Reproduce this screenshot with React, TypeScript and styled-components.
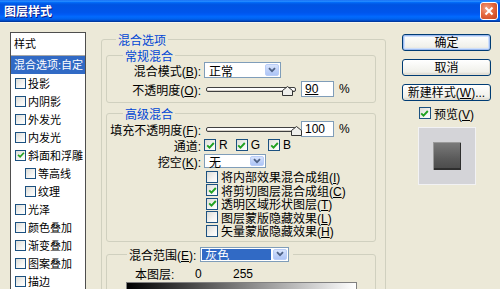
import React from 'react';
import styled, { createGlobalStyle } from 'styled-components';

const Global = createGlobalStyle`
  html, body { margin: 0; padding: 0; background: #ECE9D8; }
  body {
    font-family: "Liberation Sans", "Noto Sans CJK SC", sans-serif;
    font-size: 12px;
    color: #000;
  }
  * { box-sizing: border-box; }
  u { text-decoration: underline; text-underline-offset: 1px; }
`;

const Window = styled.div`
  width: 500px;
  height: 289px;
  overflow: hidden;
  display: flex;
  flex-direction: column;
  background: #ECE9D8;
`;

const TitleBar = styled.div`
  flex: none;
  height: 23px;
  display: flex;
  align-items: center;
  justify-content: space-between;
  padding: 0 2px 1px 4px;
  border-bottom: 1px solid #F7F5EE;
  background: linear-gradient(#0058ee 0%, #3593ff 4%, #288eff 6%, #127dff 8%, #036ffc 10%, #0262ee 14%, #0057e5 20%, #0054e3 24%, #0055eb 56%, #005bf5 66%, #026afe 76%, #0062ef 86%, #0052d6 92%, #0040ab 96%, #003092 100%);
`;

const Title = styled.div`
  font-family: "Noto Sans CJK SC", sans-serif;
  font-weight: 700;
  font-size: 12px;
  line-height: 14px;
  color: #fff;
  text-shadow: 1px 1px 0 #0a1883;
`;

const CloseBtn = styled.div`
  width: 18px;
  height: 18px;
  border: 1px solid #fff;
  border-radius: 3px;
  background: radial-gradient(circle at 35% 35%, #f3a58a 0%, #e5693f 45%, #c4401c 100%);
  display: flex;
  align-items: center;
  justify-content: center;
`;

const Body = styled.div`
  flex: 1;
  display: flex;
  align-items: flex-start;
  padding: 9px 0 0 10px;
`;

const StyleList = styled.div`
  flex: none;
  width: 76px;
  height: 270px;
  background: #fff;
  border: 1px solid #4e4e4e;
  font-size: 11px;
`;

const ListHeader = styled.div`
  height: 23px;
  line-height: 22px;
  padding-left: 3px;
  border-bottom: 1px solid #a8a8a8;
`;

const ListSelected = styled.div`
  height: 18px;
  line-height: 18px;
  padding-left: 3px;
  background: #316ac5;
  color: #fff;
  white-space: nowrap;
`;

const ListItem = styled.div<{ $indent?: boolean }>`
  height: 18px;
  display: flex;
  align-items: center;
  gap: 2px;
  padding-left: ${p => (p.$indent ? 14 : 4)}px;
  white-space: nowrap;
`;

const CheckBox = styled.span<{ $size: number }>`
  flex: none;
  width: ${p => p.$size}px;
  height: ${p => p.$size}px;
  border: 1px solid #1c5180;
  background: linear-gradient(135deg, #dcdcd7 0%, #f4f4f2 60%, #ffffff 100%);
  display: inline-flex;
  align-items: center;
  justify-content: center;
`;

const Main = styled.div`
  flex: none;
  margin-left: 15px;
  margin-top: 1px;
`;

const Group = styled.fieldset<{ $outer?: boolean; $mt?: number }>`
  margin: ${p => p.$mt ?? 0}px 0 0 0;
  padding: ${p => (p.$outer ? '0 9px 0 4px' : '0')};
  border: 1px solid #d0d0bf;
  border-radius: 3px;
  min-width: 0;
  width: ${p => (p.$outer ? '285px' : '270px')};
  height: ${p => (p.$outer ? '300px' : 'auto')};
`;

const Legend = styled.legend<{ $ml: number }>`
  margin-left: ${p => p.$ml}px;
  padding: 0 2px;
  font-size: 12px;
  line-height: 13px;
  color: #0046d5;
  font-family: "Noto Sans CJK SC", sans-serif;
`;

const RangeLegend = styled.legend`
  margin-left: 20px;
  padding: 0 4px 0 2px;
  display: flex;
  align-items: center;
  gap: 4px;
  height: 15px;
`;

const GroupBody = styled.div<{ $pt?: number; $pb?: number; $gap?: number }>`
  display: flex;
  flex-direction: column;
  gap: ${p => p.$gap ?? 0}px;
  padding-top: ${p => p.$pt ?? 0}px;
  padding-bottom: ${p => p.$pb ?? 0}px;
`;

const Row = styled.div<{ $h: number; $mt?: number }>`
  height: ${p => p.$h}px;
  margin-top: ${p => p.$mt ?? 0}px;
  display: flex;
  align-items: center;
  white-space: nowrap;
`;

const Label = styled.div`
  flex: none;
  width: 96px;
  padding-right: 2px;
  text-align: right;
  white-space: nowrap;
  margin-right: 1px;
`;

const SelectBox = styled.div<{ $w: number; $h: number }>`
  flex: none;
  width: ${p => p.$w}px;
  height: ${p => p.$h}px;
  border: 1px solid #7f9db9;
  background: #fff;
  display: flex;
  align-items: stretch;
  padding: 1px;
`;

const SelectText = styled.div<{ $hl?: boolean }>`
  flex: 1;
  padding-left: 3px;
  display: flex;
  align-items: center;
  background: ${p => (p.$hl ? '#316ac5' : 'transparent')};
  color: ${p => (p.$hl ? '#fff' : '#000')};
  margin-right: 2px;
`;

const DropBtn = styled.div`
  flex: none;
  width: 14px;
  border: 1px solid #b9cdf7;
  border-radius: 2px;
  background: linear-gradient(#d8e4fc, #bccff8 60%, #aec5f6);
  display: flex;
  align-items: center;
  justify-content: center;
`;

const SliderWrap = styled.div`
  flex: none;
  position: relative;
  width: 90px;
  height: 16px;
  margin-left: 2px;
`;

const Track = styled.div`
  margin-top: 6px;
  height: 5px;
  border: 1px solid #404040;
  border-radius: 2px;
  background: #fff;
  box-shadow: inset 0 -1px 0 #d4d0c8;
`;

const Thumb = styled.svg`
  position: absolute;
  top: 5px;
`;

const NumInput = styled.div`
  flex: none;
  width: 33px;
  height: 16px;
  margin-left: 5px;
  border: 1px solid #7f9db9;
  background: #fff;
  padding-left: 3px;
  line-height: 14px;
`;

const Pct = styled.span`
  margin-left: 5px;
`;

const Channel = styled.span`
  display: inline-flex;
  align-items: center;
  gap: 3px;
  margin-right: 8px;
`;

const CheckRow = styled.div`
  height: 13.5px;
  display: flex;
  align-items: center;
  gap: 3px;
  padding-left: 99px;
  white-space: nowrap;
`;

const RangeRow = styled.div`
  height: 14px;
  display: flex;
  align-items: center;
  padding-left: 28px;
`;

const RangeCell = styled.span<{ $w: number }>`
  width: ${p => p.$w}px;
`;

const GradientBar = styled.div`
  margin: 1px 0 0 19px;
  width: 231px;
  height: 12px;
  border: 1px solid #808080;
  background: linear-gradient(to right, #000, #fff);
`;

const RightCol = styled.div`
  flex: none;
  width: 89px;
  margin-left: 16px;
  margin-top: 2px;
  display: flex;
  flex-direction: column;
  align-items: center;
`;

const Button = styled.div<{ $default?: boolean }>`
  width: 89px;
  height: 17px;
  margin-bottom: 8px;
  border: 1px solid #003c74;
  border-radius: 3px;
  background: linear-gradient(#ffffff, #f0f0ea 80%, #d6d0c5);
  box-shadow: ${p => (p.$default ? 'inset 0 0 0 1px #9ebbf0, inset 0 0 0 2px #cfe0fb' : 'inset -1px -1px 0 #e3e0d5')};
  display: flex;
  align-items: center;
  justify-content: center;
  line-height: 14px;
  white-space: nowrap;
`;

const PreviewRow = styled.div`
  height: 14px;
  margin-top: -3px;
  display: flex;
  align-items: center;
  gap: 3px;
`;

const PreviewFrame = styled.div`
  margin-top: 7px;
  width: 58px;
  height: 58px;
  background: #d4d4d8;
  border: 1px solid #f2f2f4;
  display: flex;
  align-items: center;
  justify-content: center;
`;

const PreviewSwatch = styled.div`
  width: 28px;
  height: 28px;
  background: linear-gradient(#7c7c7c, #5a5a5a 60%, #4a4a4a);
  box-shadow: inset 1px 1px 0 #9a9a9a, inset -1px -2px 0 #2e2e2e;
`;

const Spacer = styled.div<{ $h: number }>`
  height: ${p => p.$h}px;
`;

const Check: React.FC<{ checked?: boolean; size?: number }> = ({ checked, size = 12 }) => (
  <CheckBox $size={size}>
    {checked && (
      <svg width={size - 3} height={size - 3} viewBox="0 0 9 9">
        <path d="M1.2 4.3 L3.5 6.6 L7.8 2" stroke="#21a121" strokeWidth="1.9" fill="none" />
      </svg>
    )}
  </CheckBox>
);

const Select: React.FC<{ value: string; w: number; h?: number; hl?: boolean }> = ({ value, w, h = 16, hl }) => (
  <SelectBox $w={w} $h={h}>
    <SelectText $hl={hl}>{value}</SelectText>
    <DropBtn>
      <svg width="8" height="6" viewBox="0 0 8 6">
        <path d="M1 1.2 L4 4.2 L7 1.2" stroke="#4d6185" strokeWidth="1.8" fill="none" />
      </svg>
    </DropBtn>
  </SelectBox>
);

const Slider: React.FC<{ value: number }> = ({ value }) => (
  <SliderWrap>
    <Track />
    <Thumb width="11" height="10" viewBox="0 0 11 10" style={{ left: `${(value / 100) * 90 - 5.5}px` }}>
      <path d="M0.5 9.5 L0.5 4.5 L5.5 0.5 L10.5 4.5 L10.5 9.5 Z" fill="#f0f0ec" stroke="#333" strokeWidth="1" />
    </Thumb>
  </SliderWrap>
);

const listItems: { label: string; checked?: boolean; indent?: boolean }[] = [
  { label: '投影' },
  { label: '内阴影' },
  { label: '外发光' },
  { label: '内发光' },
  { label: '斜面和浮雕', checked: true },
  { label: '等高线', indent: true },
  { label: '纹理', indent: true },
  { label: '光泽' },
  { label: '颜色叠加' },
  { label: '渐变叠加' },
  { label: '图案叠加' },
  { label: '描边' },
];

const options: { text: string; key: string; checked: boolean }[] = [
  { text: '将内部效果混合成组', key: 'I', checked: false },
  { text: '将剪切图层混合成组', key: 'C', checked: true },
  { text: '透明区域形状图层', key: 'T', checked: true },
  { text: '图层蒙版隐藏效果', key: 'L', checked: false },
  { text: '矢量蒙版隐藏效果', key: 'H', checked: false },
];

export default function App() {
  return (
    <>
      <Global />
      <Window>
        <TitleBar>
          <Title>图层样式</Title>
          <CloseBtn>
            <svg width="10" height="10" viewBox="0 0 10 10">
              <path d="M1.5 1.5 L8.5 8.5 M8.5 1.5 L1.5 8.5" stroke="#fff" strokeWidth="2" />
            </svg>
          </CloseBtn>
        </TitleBar>
        <Body>
          <StyleList>
            <ListHeader>样式</ListHeader>
            <ListSelected>混合选项:自定</ListSelected>
            {listItems.map(it => (
              <ListItem key={it.label} $indent={it.indent}>
                <Check size={11} checked={it.checked} />
                <span>{it.label}</span>
              </ListItem>
            ))}
          </StyleList>

          <Main>
            <Group $outer>
              <Legend $ml={10}>混合选项</Legend>
              <Group $mt={3}>
                <Legend $ml={16}>常规混合</Legend>
                <GroupBody $pt={0} $pb={5} $gap={3}>
                  <Row $h={16}>
                    <Label>混合模式(<u>B</u>):</Label>
                    <Select value="正常" w={77} />
                  </Row>
                  <Row $h={16}>
                    <Label>不透明度(<u>O</u>):</Label>
                    <Slider value={90} />
                    <NumInput><u>90</u></NumInput>
                    <Pct>%</Pct>
                  </Row>
                </GroupBody>
              </Group>

              <Group $mt={4}>
                <Legend $ml={16}>高级混合</Legend>
                <GroupBody $pt={1} $pb={3}>
                  <Row $h={16}>
                    <Label>填充不透明度(<u>F</u>):</Label>
                    <Slider value={100} />
                    <NumInput>100</NumInput>
                    <Pct>%</Pct>
                  </Row>
                  <Row $h={14} $mt={1}>
                    <Label>通道:</Label>
                    <Channel><Check checked />R</Channel>
                    <Channel><Check checked />G</Channel>
                    <Channel><Check checked />B</Channel>
                  </Row>
                  <Row $h={14} $mt={2}>
                    <Label>挖空(<u>K</u>):</Label>
                    <Select value="无" w={62} h={14} />
                  </Row>
                  <Spacer $h={2} />
                  {options.map(o => (
                    <CheckRow key={o.key}>
                      <Check checked={o.checked} />
                      <span>
                        {o.text}(<u>{o.key}</u>)
                      </span>
                    </CheckRow>
                  ))}
                </GroupBody>
              </Group>

              <Group $mt={5}>
                <RangeLegend>
                  <span>混合范围(<u>E</u>):</span>
                  <Select value="灰色" w={89} h={15} hl />
                </RangeLegend>
                <GroupBody $pt={5}>
                  <RangeRow>
                    <RangeCell $w={60}>本图层:</RangeCell>
                    <RangeCell $w={38}>0</RangeCell>
                    <RangeCell $w={30}>255</RangeCell>
                  </RangeRow>
                  <GradientBar />
                </GroupBody>
              </Group>
            </Group>
          </Main>

          <RightCol>
            <Button $default>确定</Button>
            <Button>取消</Button>
            <Button>新建样式(<u>W</u>)...</Button>
            <PreviewRow>
              <Check checked />
              <span>预览(<u>V</u>)</span>
            </PreviewRow>
            <PreviewFrame>
              <PreviewSwatch />
            </PreviewFrame>
          </RightCol>
        </Body>
      </Window>
    </>
  );
}
